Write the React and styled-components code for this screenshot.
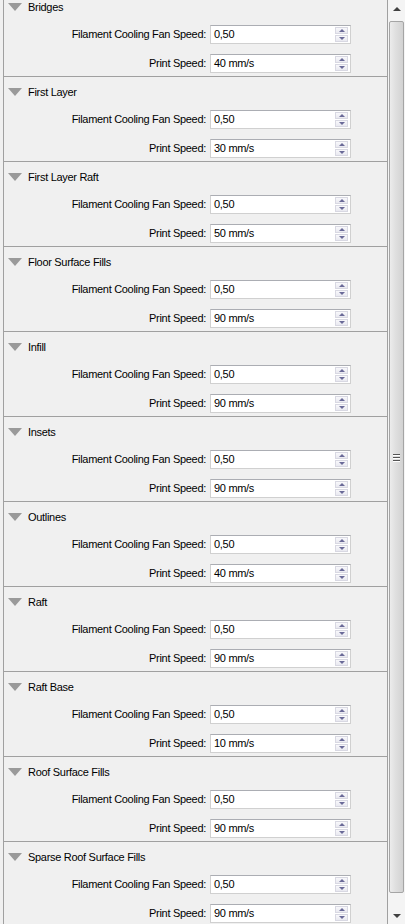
import React from 'react'
import styled, { createGlobalStyle } from 'styled-components'

const sections = [
  { title: 'Bridges', speed: '40 mm/s' },
  { title: 'First Layer', speed: '30 mm/s' },
  { title: 'First Layer Raft', speed: '50 mm/s' },
  { title: 'Floor Surface Fills', speed: '90 mm/s' },
  { title: 'Infill', speed: '90 mm/s' },
  { title: 'Insets', speed: '90 mm/s' },
  { title: 'Outlines', speed: '40 mm/s' },
  { title: 'Raft', speed: '90 mm/s' },
  { title: 'Raft Base', speed: '10 mm/s' },
  { title: 'Roof Surface Fills', speed: '90 mm/s' },
  { title: 'Sparse Roof Surface Fills', speed: '90 mm/s' },
]

const Global = createGlobalStyle`
  html, body { margin:0; padding:0; background:#f0f0f0; }
  body {
    font-family: "Liberation Sans", Arial, sans-serif;
    font-size:11px;
    letter-spacing:-0.3px;
    color:#000;
  }
`

const Window = styled.div`
  width:405px;
  height:924px;
  display:flex;
  background:#f0f0f0;
  overflow:hidden;
`

const Panel = styled.div`
  margin-left:3px;
  width:383px;
  border-left:1px solid #a0a0a0;
  border-right:1px solid #a0a0a0;
  overflow:hidden;
`

const List = styled.div`
  margin-top:-9px;
`

const Section = styled.div`
  border-top:1px solid #a0a0a0;
  height:84px;
  display:flex;
  flex-direction:column;
  gap:7px;
`

const Header = styled.div`
  height:30px;
  flex-shrink:0;
  display:flex;
  align-items:center;
  padding-left:4px;
  gap:6px;
  margin-bottom:-6px;
`

const Triangle = styled.span`
  width:0;
  height:0;
  border-left:7px solid transparent;
  border-right:7px solid transparent;
  border-top:8px solid #9a9a9a;
`

const Row = styled.div`
  height:22px;
  flex-shrink:0;
  display:flex;
  align-items:center;
`

const Label = styled.div`
  width:206px;
  text-align:right;
  padding-right:4px;
  box-sizing:border-box;
  white-space:nowrap;
`

const Field = styled.div`
  width:141px;
  height:19px;
  box-sizing:border-box;
  background:#fff;
  border:1px solid #d0d0d0;
  border-top-color:#abadb3;
  display:flex;
  align-items:center;
  padding-left:3px;
  position:relative;
`

const Spin = styled.div`
  position:absolute;
  right:2px;
  top:1px;
  bottom:1px;
  width:13px;
  display:flex;
  flex-direction:column;
  gap:1px;
`

const SpinBtn = styled.div`
  flex:1;
  border:1px solid #d8d8e2;
  background:linear-gradient(#f8f8fb,#e9e9f0);
  display:flex;
  align-items:center;
  justify-content:center;
  &::after{
    content:'';
    width:0;height:0;
    border-left:3px solid transparent;
    border-right:3px solid transparent;
    ${p => p.$down ? 'border-top:3px solid #6a6a98;' : 'border-bottom:3px solid #6a6a98;'}
  }
`

const Scrollbar = styled.div`
  width:17px;
  display:flex;
  flex-direction:column;
  background:#f4f4f4;
`

const Arrow = styled.div`
  height:17px;
  display:flex;
  align-items:center;
  justify-content:center;
  &::after{
    content:'';
    width:0;height:0;
    border-left:4px solid transparent;
    border-right:4px solid transparent;
    ${p => p.$down ? 'border-top:4px solid #404040;' : 'border-bottom:4px solid #404040;'}
  }
`

const Track = styled.div`
  flex:1;
  padding:4px 1px 14px 1px;
  display:flex;
`

const Thumb = styled.div`
  flex:1;
  border:1px solid #a5a5a5;
  border-radius:2px;
  background:linear-gradient(to right,#ececec,#e0e0e0 40%,#d2d2d2);
  display:flex;
  flex-direction:column;
  align-items:center;
  justify-content:center;
  gap:2px;
`

const Grip = styled.span`
  width:7px;
  height:1px;
  background:#555;
  box-shadow:0 1px 0 #fff;
`

function Spinner({ value }) {
  return (
    <Field>
      {value}
      <Spin>
        <SpinBtn />
        <SpinBtn $down />
      </Spin>
    </Field>
  )
}

export default function App() {
  return (
    <>
      <Global />
      <Window>
        <Panel>
          <List>
            {sections.map(s => (
              <Section key={s.title}>
                <Header><Triangle />{s.title}</Header>
                <Row>
                  <Label>Filament Cooling Fan Speed:</Label>
                  <Spinner value='0,50' />
                </Row>
                <Row>
                  <Label>Print Speed:</Label>
                  <Spinner value={s.speed} />
                </Row>
              </Section>
            ))}
          </List>
        </Panel>
        <Scrollbar>
          <Arrow />
          <Track>
            <Thumb><Grip /><Grip /><Grip /></Thumb>
          </Track>
          <Arrow $down />
        </Scrollbar>
      </Window>
    </>
  )
}
